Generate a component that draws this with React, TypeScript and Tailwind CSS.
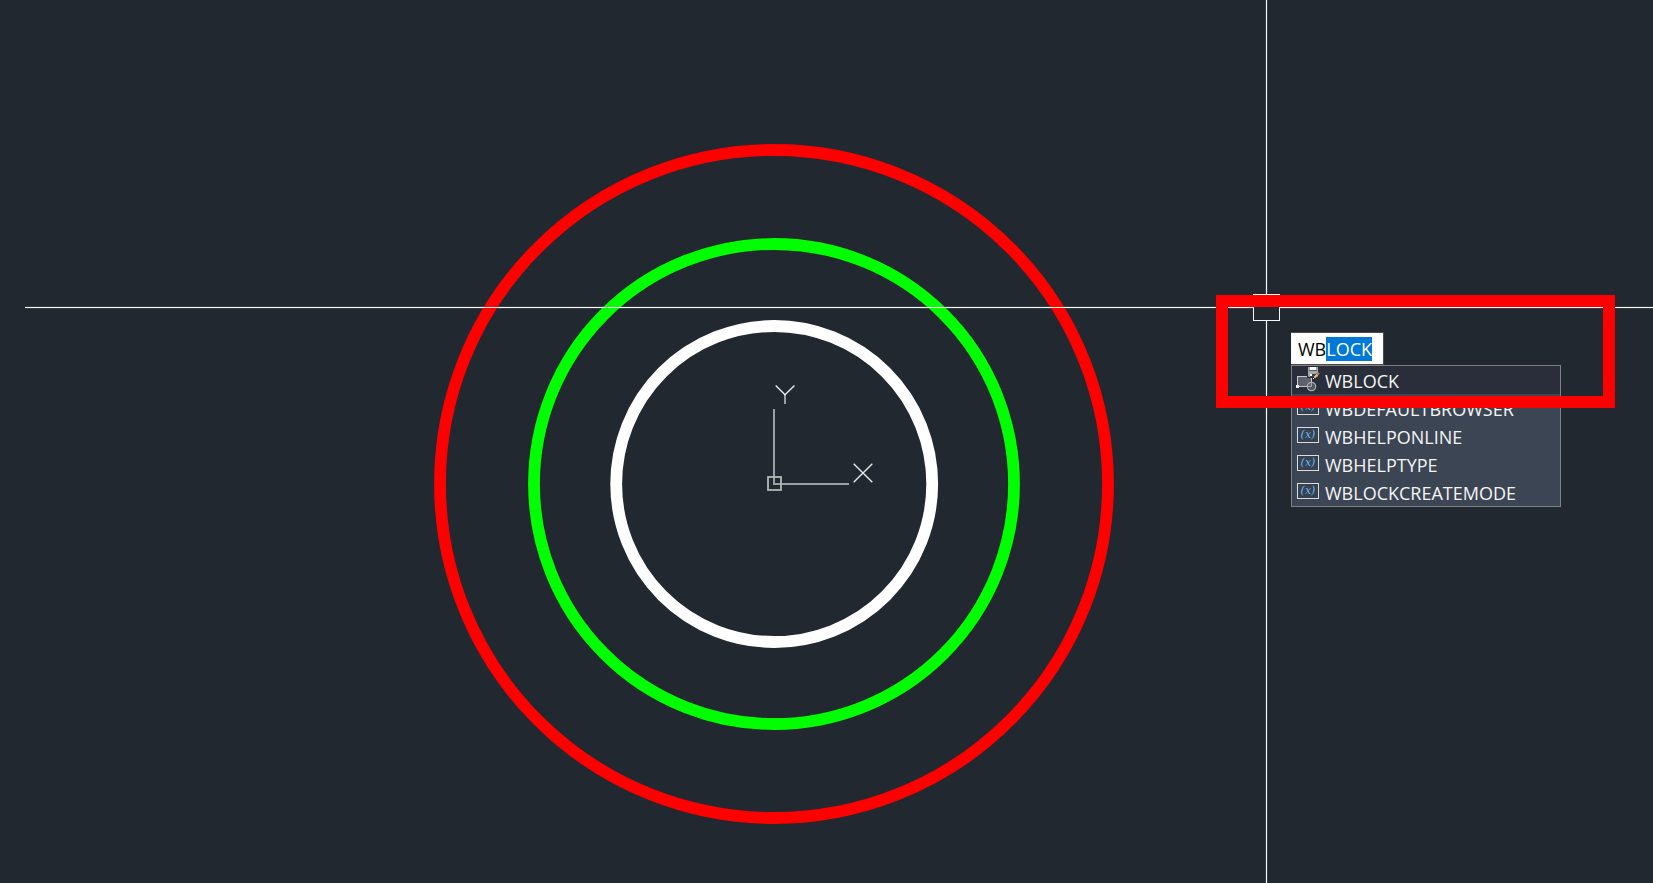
import { useEffect, useRef, useState } from "react";

const suggestions = [
  { name: "WBLOCK", type: "command" },
  { name: "WBDEFAULTBROWSER", type: "variable" },
  { name: "WBHELPONLINE", type: "variable" },
  { name: "WBHELPTYPE", type: "variable" },
  { name: "WBLOCKCREATEMODE", type: "variable" },
];

export default function App() {
  return (
    <main className="relative min-h-screen w-full overflow-hidden bg-[#222830] font-['Open_Sans','Noto_Sans',sans-serif]">
      <Drawing />
      <CommandPrompt />
      {/* highlight frame */}
      <div className="pointer-events-none absolute top-[295px] left-[1216px] h-[113px] w-[399px] border-12 border-[#ff0000]" />
    </main>
  );
}

function Drawing() {
  return (
    <svg
      className="block h-screen w-full"
      viewBox="0 0 1653 883"
      preserveAspectRatio="xMinYMin slice"
      fill="none"
    >
      {/* soft edge of the crosshair */}
      <g stroke="#373d45" strokeWidth="3">
        <path d="M25 307.5H1253M1280 307.5H1653" />
        <path d="M1266.5 0V294M1266.5 321V883" />
      </g>
      <circle cx="774" cy="484" r="334" stroke="#ff0000" strokeWidth="11.8" />
      <circle cx="774" cy="484" r="240" stroke="#00ff00" strokeWidth="11.8" />
      <circle cx="774.2" cy="484" r="158" stroke="#ffffff" strokeWidth="11.8" />
      {/* ucs icon */}
      <g stroke="#9c9ea5" strokeWidth="2">
        <path d="M774 409V484H849" />
        <path d="M785 394V404" />
      </g>
      <rect x="768" y="477" width="13" height="13" stroke="#b4b8b2" strokeWidth="1.8" />
      <g stroke="#e8eaec" strokeWidth="1.4">
        <path d="M775.7 385.5L785 394.8L794.5 385.5" />
        <path d="M853.7 463.7L872.3 482.3M872.3 463.7L853.7 482.3" />
      </g>
      <g stroke="#f8f8f8">
        <path d="M25 307.5H1253M1280 307.5H1653" />
        <path d="M1266.5 0V294M1266.5 321V883" />
        <rect x="1253.5" y="294.5" width="26" height="26" />
      </g>
    </svg>
  );
}

function CommandPrompt() {
  const [command, setCommand] = useState("WBLOCK");
  const inputRef = useRef<HTMLInputElement>(null);

  useEffect(() => {
    // the typed part stays, the completed part is selected
    inputRef.current?.focus();
    inputRef.current?.setSelectionRange(2, 6);
  }, []);

  return (
    <div className="absolute top-[332px] left-[1291px] w-[270px] text-[18px] leading-[25px]">
      <input
        ref={inputRef}
        aria-label="Command"
        value={command}
        onChange={(e) => setCommand(e.target.value)}
        className="block h-[33px] w-[93px] border border-l-0 border-[#4a4a4a] bg-white px-[7px] text-black outline-none selection:bg-[#0078d7] selection:text-white"
      />
      <ul className="border border-[#808080] bg-[#3c4553] text-[#f5f5f5]">
        {suggestions.map((item) => (
          <li key={item.name}>
            <button
              onClick={() => setCommand(item.name)}
              className={
                item.type === "command"
                  ? "flex h-7 w-full items-start gap-[5px] bg-[#292e3a] pl-1"
                  : "flex h-7 w-full items-start gap-[5px] pl-1"
              }
            >
              {item.type === "command" ? <CommandIcon /> : <VariableIcon />}
              <span className="pt-[3px]">{item.name}</span>
            </button>
          </li>
        ))}
      </ul>
    </div>
  );
}

function CommandIcon() {
  return (
    <svg className="h-7 w-6 shrink-0" viewBox="0 0 24 28" fill="none">
      <rect x="1.5" y="10.5" width="14" height="10" fill="#5c616b" stroke="#c8c8c8" />
      <rect x="0" y="19" width="3" height="3" fill="#f0f0f0" />
      <circle cx="15.5" cy="20.5" r="4.2" fill="#5c616b" fillOpacity="0.8" stroke="#a8abb0" strokeWidth="1.2" />
      <path d="M15.5 16.5V20.5H11.5" stroke="#a8abb0" />
      {/* floppy */}
      <rect x="11" y="1" width="12" height="11" fill="#292e3a" />
      <path d="M12 1H22V11H13L12 10Z" fill="#a6a8ac" />
      <rect x="14" y="1" width="6" height="3" fill="#ffffff" />
      <rect x="13" y="4" width="8" height="1" fill="#5c616b" />
      <rect x="14" y="8" width="6" height="3" fill="#3a3f4a" />
      <rect x="14" y="8" width="2" height="2" fill="#f5f5f5" />
      {/* pencil */}
      <path d="M17 13L18 10L21 7L23 9L20 12Z" fill="#292e3a" />
      <path d="M18.5 11.5L21.5 8.5" stroke="#f3c46a" strokeWidth="2" />
      <path d="M21.5 8.5L23 7" stroke="#e0726a" strokeWidth="2" />
      <path d="M17 13L18.5 11.5" stroke="#f0f0f0" />
    </svg>
  );
}

function VariableIcon() {
  return (
    <svg className="h-7 w-6 shrink-0" viewBox="0 0 24 28" fill="none">
      <rect x="1.5" y="5.5" width="21" height="15" fill="#36424f" stroke="#dcdcdc" />
      <text
        x="12"
        y="16"
        textAnchor="middle"
        className="fill-[#6cb8f0] font-['DejaVu_Serif','Liberation_Serif',serif] text-[11px] italic"
      >
        (x)
      </text>
    </svg>
  );
}
